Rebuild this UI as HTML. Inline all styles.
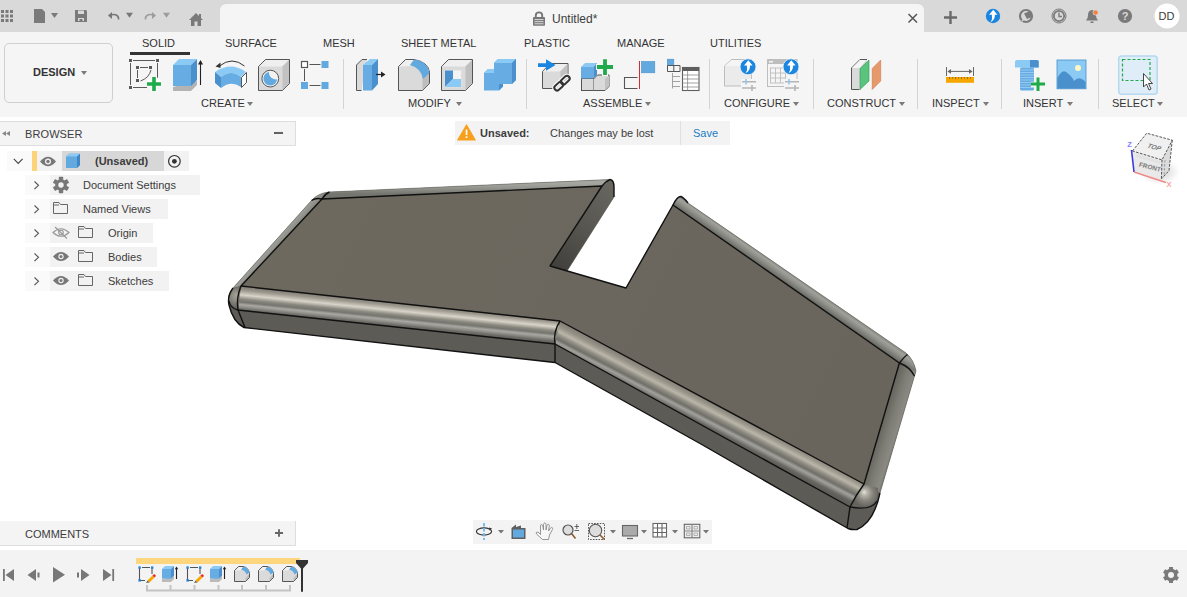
<!DOCTYPE html>
<html><head><meta charset="utf-8">
<style>
*{box-sizing:border-box;margin:0;padding:0}
html,body{width:1187px;height:597px;overflow:hidden;background:#fff;font-family:"Liberation Sans",sans-serif;color:#3c3c3c}
.a{position:absolute}
.t{position:absolute;white-space:pre;line-height:1}
svg{position:absolute;overflow:visible}
#title{left:0;top:0;width:1187px;height:32px;background:#d9d9d9}
#tab{left:220px;top:4px;width:704px;height:28px;background:#f5f5f5;border-radius:6px 6px 0 0}
#tb{left:0;top:32px;width:1187px;height:85px;background:#f5f5f5}
.tl{font-size:11px;color:#333}
.sep{position:absolute;top:59px;width:1px;height:50px;background:#d4d4d4}
.dd{position:absolute;width:0;height:0;border-left:3px solid transparent;border-right:3px solid transparent;border-top:4px solid #7a7a7a}
.ph{position:absolute;left:0;width:296px;height:25px;background:#f4f4f4;border-top:1px solid #dedede;border-bottom:1px solid #dedede;border-right:1px solid #dedede}
.row{position:absolute;height:20px;background:#f2f2f2}
.rt{font-size:11px;color:#3c3c3c}
</style></head><body>
<div id="title" class="a"></div>
<div id="tab" class="a"></div>
<div id="tb" class="a"></div>

<!-- title text -->
<div class="t" style="left:552px;top:13px;font-size:12px;color:#3c3c3c">Untitled*</div>

<!-- toolbar tabs -->
<div class="t tl" style="left:142px;top:38px">SOLID</div>
<div class="a" style="left:130px;top:52px;width:60px;height:3px;background:#333"></div>
<div class="t tl" style="left:225px;top:38px">SURFACE</div>
<div class="t tl" style="left:323px;top:38px">MESH</div>
<div class="t tl" style="left:401px;top:38px">SHEET METAL</div>
<div class="t tl" style="left:524px;top:38px">PLASTIC</div>
<div class="t tl" style="left:617px;top:38px">MANAGE</div>
<div class="t tl" style="left:710px;top:38px">UTILITIES</div>

<!-- design button -->
<div class="a" style="left:4px;top:43px;width:109px;height:60px;border:1.5px solid #cfcfcf;border-radius:5px"></div>
<div class="t" style="left:33px;top:67px;font-size:11px;font-weight:bold;color:#333">DESIGN</div>
<div class="dd" style="left:81px;top:71px"></div>

<!-- group labels -->
<div class="t tl" style="left:201px;top:98px">CREATE</div><div class="dd" style="left:247px;top:102px"></div>
<div class="t tl" style="left:408px;top:98px">MODIFY</div><div class="dd" style="left:456px;top:102px"></div>
<div class="t tl" style="left:583px;top:98px">ASSEMBLE</div><div class="dd" style="left:645px;top:102px"></div>
<div class="t tl" style="left:724px;top:98px">CONFIGURE</div><div class="dd" style="left:793px;top:102px"></div>
<div class="t tl" style="left:827px;top:98px">CONSTRUCT</div><div class="dd" style="left:899px;top:102px"></div>
<div class="t tl" style="left:932px;top:98px">INSPECT</div><div class="dd" style="left:983px;top:102px"></div>
<div class="t tl" style="left:1023px;top:98px">INSERT</div><div class="dd" style="left:1067px;top:102px"></div>
<div class="t tl" style="left:1112px;top:98px">SELECT</div><div class="dd" style="left:1157px;top:102px"></div>

<div class="sep" style="left:343px"></div>
<div class="sep" style="left:526px"></div>
<div class="sep" style="left:709px"></div>
<div class="sep" style="left:813px"></div>
<div class="sep" style="left:917px"></div>
<div class="sep" style="left:1001px"></div>
<div class="sep" style="left:1098px"></div>

<!-- browser -->
<div class="ph" style="top:121px"></div>
<div class="t" style="left:25px;top:129px;font-size:11px;color:#3c3c3c;letter-spacing:0.1px">BROWSER</div>
<div class="a" style="left:274px;top:132px;width:9px;height:1.5px;background:#555"></div>

<div class="row" style="top:151px;left:7px;width:182px;background:#f2f2f2"></div><div class="row" style="top:151px;left:7px;width:25px;background:#fafafa"></div>
<div class="a" style="top:151px;left:32px;width:5px;height:20px;background:#fcd378"></div>
<div class="a" style="top:151px;left:62px;width:102px;height:20px;background:#d7d7d7"></div>
<div class="t rt" style="left:95px;top:156px;font-weight:bold">(Unsaved)</div>

<div class="row" style="top:175px;left:25px;width:25px;background:#fafafa"></div><div class="row" style="top:175px;left:50px;width:150px"></div>
<div class="t rt" style="left:83px;top:180px">Document Settings</div>
<div class="row" style="top:199px;left:25px;width:25px;background:#fafafa"></div><div class="row" style="top:199px;left:50px;width:118px"></div>
<div class="t rt" style="left:83px;top:204px">Named Views</div>
<div class="row" style="top:223px;left:25px;width:25px;background:#fafafa"></div><div class="row" style="top:223px;left:50px;width:103px"></div>
<div class="t rt" style="left:108px;top:228px">Origin</div>
<div class="row" style="top:247px;left:25px;width:25px;background:#fafafa"></div><div class="row" style="top:247px;left:50px;width:107px"></div>
<div class="t rt" style="left:108px;top:252px">Bodies</div>
<div class="row" style="top:271px;left:25px;width:25px;background:#fafafa"></div><div class="row" style="top:271px;left:50px;width:119px"></div>
<div class="t rt" style="left:108px;top:276px">Sketches</div>

<!-- unsaved bar -->
<div class="a" style="left:455px;top:121px;width:275px;height:24px;background:#f3f3f3"></div>
<div class="a" style="left:680px;top:121px;width:1px;height:24px;background:#e0e0e0"></div>
<div class="t" style="left:480px;top:128px;font-size:11px;font-weight:bold;color:#3c3c3c">Unsaved:</div>
<div class="t" style="left:550px;top:128px;font-size:11px;color:#3c3c3c">Changes may be lost</div>
<div class="t" style="left:693px;top:128px;font-size:11px;color:#1a7cc4">Save</div>

<!-- comments -->
<div class="ph" style="top:521px;border-top:none;height:25px"></div>
<div class="t" style="left:25px;top:529px;font-size:11px;color:#3c3c3c">COMMENTS</div>

<!-- nav bar -->
<div class="a" style="left:473px;top:520px;width:239px;height:24px;background:#f3f3f3"></div>

<!-- timeline -->
<div class="a" style="left:0;top:550px;width:1187px;height:47px;background:#f3f3f3"></div>
<div class="a" style="left:136px;top:558px;width:164px;height:6px;background:#fdd67e"></div>

<svg width="1187" height="597" viewBox="0 0 1187 597" style="left:0;top:0"><defs>
 <linearGradient id="gfL" gradientUnits="userSpaceOnUse" x1="400" y1="303.4" x2="397.6" y2="327">
  <stop offset="0" stop-color="#85827a"/>
  <stop offset="0.12" stop-color="#9b978c"/>
  <stop offset="0.32" stop-color="#d8d4c9"/>
  <stop offset="0.5" stop-color="#8a887f"/>
  <stop offset="0.62" stop-color="#75746e"/>
  <stop offset="0.73" stop-color="#a9a8a2"/>
  <stop offset="0.82" stop-color="#908f89"/>
  <stop offset="0.92" stop-color="#6e6e69"/>
  <stop offset="1" stop-color="#62615c"/>
 </linearGradient>
 <linearGradient id="gfR" gradientUnits="userSpaceOnUse" x1="700" y1="396" x2="688" y2="419">
  <stop offset="0" stop-color="#86837a"/>
  <stop offset="0.14" stop-color="#969287"/>
  <stop offset="0.32" stop-color="#bab6a9"/>
  <stop offset="0.46" stop-color="#8e8b82"/>
  <stop offset="0.6" stop-color="#6f6e68"/>
  <stop offset="0.72" stop-color="#a2a19b"/>
  <stop offset="0.8" stop-color="#8b8a84"/>
  <stop offset="0.9" stop-color="#686863"/>
  <stop offset="1" stop-color="#5e5d58"/>
 </linearGradient>
 <linearGradient id="gTop" gradientUnits="userSpaceOnUse" x1="300" y1="200" x2="850" y2="480">
  <stop offset="0" stop-color="#6d695f"/>
  <stop offset="0.5" stop-color="#6b675e"/>
  <stop offset="1" stop-color="#69655c"/>
 </linearGradient>
 <linearGradient id="gBack" gradientUnits="userSpaceOnUse" x1="450" y1="183" x2="450" y2="194">
  <stop offset="0" stop-color="#a6a7a0"/>
  <stop offset="0.45" stop-color="#94958e"/>
  <stop offset="1" stop-color="#75756f"/>
 </linearGradient>
 <linearGradient id="gBR" gradientUnits="userSpaceOnUse" x1="800" y1="293.6" x2="805.9" y2="285.1">
  <stop offset="0" stop-color="#5f5f5a"/>
  <stop offset="0.18" stop-color="#75756f"/>
  <stop offset="0.55" stop-color="#8f9089"/>
  <stop offset="0.85" stop-color="#a0a19a"/>
  <stop offset="1" stop-color="#8f9089"/>
 </linearGradient>
 <linearGradient id="gBL" gradientUnits="userSpaceOnUse" x1="272" y1="246" x2="280" y2="253">
  <stop offset="0" stop-color="#9c9d96"/>
  <stop offset="0.45" stop-color="#8b8c85"/>
  <stop offset="1" stop-color="#6c6c66"/>
 </linearGradient>
 <linearGradient id="gEnd" gradientUnits="userSpaceOnUse" x1="906" y1="425" x2="884" y2="418">
  <stop offset="0" stop-color="#5c5b56"/>
  <stop offset="0.3" stop-color="#8a8982"/>
  <stop offset="0.65" stop-color="#7d7c75"/>
  <stop offset="1" stop-color="#67665f"/>
 </linearGradient>
 <linearGradient id="gWall" gradientUnits="userSpaceOnUse" x1="560" y1="268" x2="612" y2="188">
  <stop offset="0" stop-color="#42413d"/>
  <stop offset="0.5" stop-color="#575650"/>
  <stop offset="1" stop-color="#666560"/>
 </linearGradient>
 <radialGradient id="gBallR" gradientUnits="userSpaceOnUse" cx="866" cy="494" r="13" fx="864" fy="492">
  <stop offset="0" stop-color="#e6e3da"/>
  <stop offset="0.25" stop-color="#b4b1a7"/>
  <stop offset="0.6" stop-color="#85837b"/>
  <stop offset="1" stop-color="#64635d"/>
 </radialGradient>
 <radialGradient id="gBallL" gradientUnits="userSpaceOnUse" cx="236" cy="297" r="11" fx="237" fy="295">
  <stop offset="0" stop-color="#a9a69c"/>
  <stop offset="0.5" stop-color="#8a877e"/>
  <stop offset="1" stop-color="#64635d"/>
 </radialGradient>
</defs>
<!-- silhouette base (side face color) -->
<path d="M311.5 200.5 Q318 193 329 192 L610 179.5 Q614 180 614 187 L614 197 L567 271 L626 288 L673 205 Q677 196 681 196.5 Q684 198 688 203 L906 353 Q914 360 916 371 L880 493 Q874 522 857 529.5 Q852 530 848 528.5 L800 501 L700 443.5 L555 362.5 L244 327.5 Q233 322 229 305 Q227 296 233 288 Z" fill="#5c5b56"/>
<!-- far back fillet band -->
<path d="M329 192 L610 179.5 L602 186 L322 199 Z" fill="url(#gBack)"/>
<!-- far left fillet band -->
<path d="M311.5 200.5 Q318 193 329 192 L322 199 L241 286 L233 288 Z" fill="url(#gBL)"/>
<!-- far right fillet band -->
<path d="M681 196.5 Q684 198 688 203 L906 353 Q914 360 916 371 L899.4 363 L673 205 Q677 196 681 196.5 Z" fill="url(#gBR)"/>
<!-- right end fillet band -->
<path d="M899.4 363 L916 371 L880 493 L864 484 Z" fill="url(#gEnd)"/>
<!-- near fillet left -->
<path d="M241 286 L560 321 L555 344 L238 310 Z" fill="url(#gfL)"/>
<!-- near fillet right -->
<path d="M560 321 L864 484 L850 507 L555 344 Z" fill="url(#gfR)"/>
<!-- notch wall -->
<path d="M602 186 L610 179.5 Q614 180 614 187 L614 197 L567 271 L550 266 Z" fill="url(#gWall)"/>
<!-- corner balls -->
<path d="M241 286 L233 288 Q226 296 229 303 Q232 310 238 310 Z" fill="url(#gBallL)"/>
<path d="M864 484 L878 488 Q879 503 869 508 Q858 510 850 507 Z" fill="url(#gBallR)"/>
<!-- top face -->
<path d="M241 286 L322 199 L602 186 L550 266 L626 288 L673 205 L899.4 363 L864 484 L560 321 Z" fill="url(#gTop)"/>
<!-- soft silhouette edge -->
<path d="M233 288 L311.5 200.5 Q318 193 329 192 L610 179.5 M614 197 L567 271 M688 203 L906 353 Q914 360 916 371 L880 493" fill="none" stroke="#6a6a65" stroke-width="0.6"/>
<!-- lines -->
<g fill="none" stroke="#111" stroke-width="1.4" stroke-linejoin="round">
 <path d="M241 286 L322 199 L602 186 L550 266 L626 288 L673 205 L899.4 363 L864 484 L560 321 Z"/>
 <path d="M238 310 L555 344 L850 507"/>
 <path d="M241 286 Q236 298 238 310 L245 327.5"/>
 <path d="M560 321 Q553 332 555 344 L555 362.5"/>
 <path d="M864 484 Q856 495 850 507 L847 528"/>
 <path d="M899.4 363 Q905 356 907.5 354.5"/>
 <path d="M899.4 363 Q910 367 914.5 376"/>
 <path d="M322 199 Q325 194 329.5 192"/>
 <path d="M311.5 200.5 Q316 197.5 322 199"/>
 <path d="M602 186 Q606 181 610 179.5 Q614 180 614 187 L614 197"/>
 <path d="M673 205 Q677 196.5 681 196.5 Q684 198 688 203"/>
 <path d="M238 310 Q230 308 229 301"/>
 <path d="M850 507 Q871 511 877 501"/>
 <path d="M880 493 Q874 522 857 529.5 Q852 530 848 528.5 L800 501 L700 443.5 L555 362.5 L244 327.5 Q233 322 229 305 Q227 296 233 288"/>
</g>
<!-- title bar icons -->
<g fill="#7a7a7a">
  <!-- grid 3x3 -->
  <rect x="1" y="10" width="3" height="3"/><rect x="5.5" y="10" width="3" height="3"/><rect x="10" y="10" width="3" height="3"/>
  <rect x="1" y="14.5" width="3" height="3"/><rect x="5.5" y="14.5" width="3" height="3"/><rect x="10" y="14.5" width="3" height="3"/>
  <rect x="1" y="19" width="3" height="3"/><rect x="5.5" y="19" width="3" height="3"/><rect x="10" y="19" width="3" height="3"/>
  <!-- file -->
  <path d="M34 9h8l3 3v11h-11z"/>
  <path d="M51 13h7l-3.5 5z"/>
  <!-- save -->
  <path d="M75 10h11l1 1v11h-12z"/>
</g>
<rect x="78" y="10.5" width="6" height="3.5" fill="#d9d9d9"/>
<rect x="78" y="18" width="6" height="3" fill="#d9d9d9"/>
<rect x="79.5" y="19" width="3" height="2" fill="#7a7a7a"/>
<!-- undo -->
<path d="M109.5 15.5 Q114 13.5 117 15.5 Q119 17 118.5 19.5" fill="none" stroke="#777" stroke-width="1.6"/>
<path d="M108 15.5 L112 12 L112 19 Z" fill="#777"/>
<path d="M126 12.7h7l-3.5 5z" fill="#777"/>
<!-- redo -->
<path d="M154.5 15.5 Q150 13.5 147 15.5 Q145 17 145.5 19.5" fill="none" stroke="#9c9c9c" stroke-width="1.6"/>
<path d="M156 15.5 L152 12 L152 19 Z" fill="#9c9c9c"/>
<path d="M163 12.7h7l-3.5 5z" fill="#9c9c9c"/>
<!-- home -->
<path d="M189 20 L196 13 L203 20 L201 20 L201 26 L191 26 L191 20 Z" fill="#7a7a7a"/>
<rect x="199" y="14" width="2" height="4" fill="#7a7a7a"/>
<rect x="194.5" y="21.5" width="3" height="4.5" fill="#d9d9d9"/>
<!-- close x -->
<path d="M908.5 14 L917 22.5 M917 14 L908.5 22.5" stroke="#555" stroke-width="1.5"/>
<!-- plus -->
<path d="M944 17.5h13 M950.5 11v13" stroke="#6a6a6a" stroke-width="2.4"/>
<!-- blue update circle -->
<circle cx="993" cy="16" r="7.2" fill="#1a86e0"/>
<path d="M993.3 9.8 L997.4 14.8 L994.9 14.8 Q995.3 19.4 990.6 22.3 Q992.8 18.8 991.9 14.8 L989.1 14.8 Z" fill="#fff"/>
<!-- connection icon -->
<circle cx="1026" cy="16" r="6" fill="none" stroke="#7a7a7a" stroke-width="2.2"/>
<path d="M1024 13.5 L1030 11 L1032 17 L1027 19 Z" fill="#7a7a7a"/>
<path d="M1022 21 L1024.5 18.5" stroke="#d9d9d9" stroke-width="1.5"/>
<!-- clock -->
<circle cx="1059" cy="16" r="7" fill="none" stroke="#7a7a7a" stroke-width="1"/>
<circle cx="1059" cy="16" r="5.2" fill="none" stroke="#7a7a7a" stroke-width="1.8"/>
<path d="M1059 12.5 V16.5 H1062" fill="none" stroke="#7a7a7a" stroke-width="1.4"/>
<!-- bell -->
<path d="M1086 20.5 Q1088 19 1088 15 Q1088 10.5 1092 10 Q1096 10.5 1096 15 Q1096 19 1098 20.5 Z" fill="#7a7a7a"/>
<rect x="1090.5" y="21.5" width="3" height="1.5" fill="#7a7a7a"/>
<circle cx="1095.6" cy="12.5" r="2.6" fill="#f57f3b" stroke="#d9d9d9" stroke-width="0.8"/>
<!-- help -->
<circle cx="1125" cy="16" r="7.1" fill="#7a7a7a"/>
<text x="1125" y="20.3" font-family="Liberation Sans" font-weight="bold" font-size="11" fill="#d9d9d9" text-anchor="middle">?</text>
<!-- avatar -->
<circle cx="1167" cy="16" r="12.5" fill="#fff"/>
<text x="1166.5" y="20" font-family="Liberation Sans" font-size="11" fill="#3c3c3c" text-anchor="middle">DD</text>
<!-- lock -->
<path d="M535.8 17.5 V15.5 Q535.8 12.4 539 12.4 Q542.2 12.4 542.2 15.5 V17.5" fill="none" stroke="#777" stroke-width="1.9"/>
<rect x="533" y="17" width="12" height="8.8" rx="0.8" fill="#777"/>
<path d="M534.5 19.6 H543.5 M534.5 21.7 H543.5 M534.5 23.8 H543.5" stroke="#f5f5f5" stroke-width="0.8"/>
<!-- CREATE: sketch -->
<g stroke="#5a5a5a" stroke-width="1" fill="none">
  <path d="M133 60.5h22 M130.5 63v22 M157.5 63v15 M133 87.5h14"/>
  <path d="M140 67.5h8 M137.5 70v8"/>
  <path d="M151 70 Q149 78 140.5 81"/>
</g>
<g fill="#5a5a5a">
  <rect x="129" y="59" width="3" height="3"/><rect x="156" y="59" width="3" height="3"/>
  <rect x="129" y="86" width="3" height="3"/>
  <rect x="136" y="66" width="3" height="3"/><rect x="149" y="66" width="3" height="3"/><rect x="136" y="79" width="3" height="3"/>
</g>
<path d="M147 82.5h14 M154 77v14" stroke="#fff" stroke-width="6.5"/>
<path d="M147 84h14 M154 77v14" stroke="#1fab4b" stroke-width="3.6"/>
<!-- extrude -->
<path d="M173 87v4h18l6-6v-4z" fill="#b3b3b3"/>
<path d="M173 86h18l6-6v0l-6 6" fill="#f5f5f5"/>
<path d="M173 65l6-6h18l-6 6z" fill="#8ccaf6"/>
<rect x="173" y="65" width="18" height="21" fill="#67ade3"/>
<path d="M191 65l6-6v21l-6 6z" fill="#4a90cc"/>
<path d="M200.5 85v-22" stroke="#222" stroke-width="1.1"/>
<path d="M198 64.5l2.5-4.5l2.5 4.5z" fill="#222"/>
<!-- revolve -->
<path d="M219.5 66 Q232 56 244.5 66" fill="none" stroke="#333" stroke-width="1"/>
<path d="M215.5 66.5 L220.5 62.5 L220.5 68 Z" fill="#333"/>
<path d="M215 72 Q231 61 246 72 L241 77 Q231 69 221 77 Z" fill="#8ccaf6"/>
<path d="M221 77 Q231 69 241 77 V87 Q231 80 221 88 Z" fill="#67ade3"/>
<path d="M215 72 L221 77 V88 L215 83 Z" fill="#4a90cc"/>
<path d="M241.5 77.5 L246.5 72.5 V82.5 L241.5 87.5 Z" fill="#fff" stroke="#444" stroke-width="0.9"/>
<!-- hole -->
<path d="M258.5 66.5 L265.5 59.5 H289.5 V83.5 L282.5 90.5 H258.5 Z" fill="#dadada" stroke="#555" stroke-width="1"/>
<path d="M259 66.5 L266 60 H289 L282 66.5 Z" fill="#efefef"/>
<path d="M282.5 66.5 L289 60 V83.5 L282.5 90 Z" fill="#c2c2c2"/>
<mask id="mhole"><rect x="255" y="55" width="40" height="40" fill="#fff"/><circle cx="276.3" cy="71.8" r="7.6" fill="#000"/></mask>
<circle cx="270.3" cy="78.6" r="8.4" fill="#f2f2f2" stroke="#555" stroke-width="1"/>
<circle cx="270.3" cy="78.6" r="6.9" fill="#62a9df" mask="url(#mhole)"/>
<!-- pattern -->
<rect x="301.5" y="61.5" width="6" height="6" fill="#fff" stroke="#555" stroke-width="1.2"/>
<rect x="321.5" y="61" width="7" height="7" fill="#62a9df"/>
<rect x="301" y="82" width="7" height="7" fill="#62a9df"/>
<rect x="321.5" y="82" width="7" height="7" fill="#62a9df"/>
<path d="M309.5 64.5h11 M304.5 69v12 M309.5 85.5h11" stroke="#555" stroke-width="1"/>

<!-- MODIFY: press pull -->
<path d="M361.5 90.5 H356.5 V65 L362 59.5 H367" fill="#dadada" stroke="#555" stroke-width="1"/>
<rect x="357" y="65.5" width="5" height="24.5" fill="#dadada"/>
<path d="M363 65 L370 59 H378 L372 65 Z" fill="#8ccaf6"/>
<rect x="363" y="65" width="9" height="25.5" fill="#67ade3"/>
<path d="M372 65 L378 59 V84 L372 90.5 Z" fill="#4a90cc"/>
<path d="M376 74.5 H382" stroke="#222" stroke-width="1.2"/>
<path d="M381 71.5 L385.5 74.5 L381 77.5 Z" fill="#222"/>
<!-- fillet -->
<path d="M398.5 90.5 V66.5 L405.5 59.5 H414 Q428 62 429.5 72 V83.5 L422.5 90.5 Z" fill="#dadada" stroke="#555" stroke-width="1"/>
<path d="M399 66.5 L406 60 H414 L410 66 Z" fill="#efefef"/>
<path d="M422.5 75 L429 69 V83.5 L422.5 90 Z" fill="#bdbdbd"/>
<path d="M410 65 L414 59.5 Q427 61 429.5 73 L423 79 Q421 68 410 65 Z" fill="#62a9df"/>
<!-- shell -->
<path d="M441.5 66.5 L448.5 59.5 H472.5 V83.5 L465.5 90.5 H441.5 Z" fill="#dadada" stroke="#555" stroke-width="1"/>
<path d="M442 66.5 L449 60 H472 L465.5 66.5 Z" fill="#efefef"/>
<path d="M465.5 66.5 L472 60 V83.5 L465.5 90 Z" fill="#c0c0c0"/>
<rect x="444" y="69.5" width="18.5" height="18.5" fill="#dedede"/>
<rect x="445" y="70.5" width="16" height="16.5" fill="#f3f3f3"/>
<path d="M445 70.5 H453 V79 L445 87 Z" fill="#4a90cc"/>
<path d="M445 87 L453 79 H461 V87 Z" fill="#8ccaf6"/>
<!-- combine -->
<path d="M484 90.5 V73 L488 69 H494 V63 L498 59 H516 V80 L512 84 H503 V86.5 L499 90.5 Z" fill="#67ade3"/>
<path d="M484 73 L488 69 H494 V73 Z M494 63 L498 59 H516 L512 63 Z" fill="#8ccaf6"/>
<path d="M512 63 L516 59 V80 L512 84 Z M499 84 H503 V86.5 L499 90.5 Z" fill="#4a90cc"/>

<!-- ASSEMBLE: joint -->
<path d="M542.5 88.5 V71.5 L550 63.5 H568 V81 L560.5 88.5 Z" fill="#dadada" stroke="#555" stroke-width="1"/>
<path d="M543 71.5 L550.5 64 H567.5 L560 71.5 Z" fill="#efefef"/>
<path d="M560.5 71.5 L567.5 64 V81 L560.5 88 Z" fill="#c2c2c2"/>
<path d="M538 63.2 H546 V59.2 L555.5 65 L546 70.8 V67 H538 Z" fill="#1a86e0"/>
<g fill="none" stroke="#f5f5f5" stroke-width="4.5">
 <rect x="-6" y="-2.7" width="10" height="5.4" rx="2.7" transform="translate(559.5,85.5) rotate(-42)"/>
 <rect x="-4" y="-2.7" width="10" height="5.4" rx="2.7" transform="translate(564.5,80.8) rotate(-42)"/>
</g>
<g fill="none" stroke="#333" stroke-width="2">
 <rect x="-6" y="-2.7" width="10" height="5.4" rx="2.7" transform="translate(559.5,85.5) rotate(-42)"/>
 <rect x="-4" y="-2.7" width="10" height="5.4" rx="2.7" transform="translate(564.5,80.8) rotate(-42)"/>
</g>
<!-- new component -->
<rect x="581.5" y="78.5" width="12" height="12" fill="#dadada" stroke="#555" stroke-width="1"/>
<path d="M593.5 90.5 H605 L609 86.5 V75 H597.5 L593.5 79" fill="#dadada" stroke="#555" stroke-width="1"/>
<path d="M605 79 L609 75.5 V86 L605 90 Z" fill="#c2c2c2"/>
<path d="M581 67 L585 63 H597 L593 67 Z" fill="#8ccaf6"/>
<rect x="581" y="67" width="12.3" height="11.5" fill="#67ade3"/>
<path d="M593.3 67 L597 63 V75 L593.3 78.5 Z" fill="#4a90cc"/>
<path d="M596 67 H614 M605 58 V76" stroke="#f5f5f5" stroke-width="6"/>
<path d="M597 67 H613 M605 59.2 V74.9" stroke="#1fab4b" stroke-width="3.8"/>
<!-- joint origin -->
<path d="M637.5 77.5 H624.5 V88.5 H637.5" fill="none" stroke="#555" stroke-width="1.1"/>
<path d="M639.5 61 V89" stroke="#d92b2b" stroke-width="1"/>
<rect x="641.5" y="61.5" width="13.3" height="11.3" fill="#62a9df" stroke="#4a90cc" stroke-width="0.6"/>
<!-- table -->
<rect x="667.3" y="59.2" width="6.5" height="6.3" fill="#62a9df" stroke="#4a90cc" stroke-width="0.6"/>
<path d="M667.5 65.5 H680 V71.5 H667.5 Z M673.8 65.5 V71.5" fill="none" stroke="#555" stroke-width="1"/>
<path d="M672.5 73 V88.5 M672.5 76.5 H680 M672.5 81.5 H680 M672.5 86.5 H680" stroke="#999" stroke-width="0.9"/>
<rect x="682.5" y="67.5" width="16.5" height="23" fill="#fff" stroke="#5e5e5e" stroke-width="1.1"/>
<rect x="682.5" y="67.5" width="16.5" height="3.5" fill="#5e5e5e"/>
<path d="M687.6 71 V90.5 M682.5 75 H699 M682.5 79 H699 M682.5 83 H699 M682.5 87 H699" stroke="#8a8a8a" stroke-width="0.8"/>

<!-- CONFIGURE -->
<path d="M724.5 86 V66 L731.5 59.5 H751.5 V86 Z" fill="#ebebeb" stroke="#bdbdbd" stroke-width="1"/>
<path d="M725 66 L731.5 60 H751 V66 Z" fill="#f5f5f5"/>
<circle cx="748" cy="66.8" r="8" fill="#1a86e0" stroke="#f5f5f5" stroke-width="0.8"/>
<path d="M748.3 60.2 L752.6 65.4 L750 65.4 Q750.4 70.2 745.6 73.2 Q747.8 69.6 746.9 65.4 L744 65.4 Z" fill="#fff"/>
<rect x="741" y="79" width="16" height="10" fill="#f5f5f5"/>
<path d="M742 81.8 H756 M742 88 H756" stroke="#b5b5b5" stroke-width="1.6"/>
<path d="M746 79 V84.5" stroke="#8cc8f0" stroke-width="1.6"/>
<path d="M752 85 V91" stroke="#b5b5b5" stroke-width="1.6"/>

<rect x="767.5" y="59.5" width="29.5" height="27" fill="#f5f5f5" stroke="#bdbdbd" stroke-width="1"/>
<rect x="767.5" y="59.5" width="29.5" height="4.5" fill="#bdbdbd"/>
<rect x="769" y="61" width="4" height="1.5" fill="#f5f5f5"/>
<g stroke="#bdbdbd" stroke-width="0.9" fill="none">
<rect x="770.5" y="68" width="15" height="15"/>
<path d="M775.5 68 V83 M780.5 68 V83 M770.5 73 H785.5 M770.5 78 H785.5"/>
</g>
<circle cx="791" cy="66.8" r="8" fill="#1a86e0" stroke="#f5f5f5" stroke-width="0.8"/>
<path d="M791.3 60.2 L795.6 65.4 L793 65.4 Q793.4 70.2 788.6 73.2 Q790.8 69.6 789.9 65.4 L787 65.4 Z" fill="#fff"/>
<rect x="784" y="79" width="16" height="10" fill="#f5f5f5"/>
<path d="M785 81.8 H799 M785 88 H799" stroke="#b5b5b5" stroke-width="1.6"/>
<path d="M789 79 V84.5" stroke="#8cc8f0" stroke-width="1.6"/>
<path d="M795 85 V91" stroke="#b5b5b5" stroke-width="1.6"/>

<!-- CONSTRUCT -->
<path d="M859.5 89.5 H851.5 V68 L860 59.5 H867" fill="#dadada" stroke="#555" stroke-width="1"/>
<path d="M852 68 L860 60 H866 L860 68 Z" fill="#f5f5f5"/>
<path d="M860 68.5 L869 60 V81 L860 89.5 Z" fill="#5ac47e" stroke="#2a9a50" stroke-width="0.6"/>
<path d="M872.2 68.5 L880.7 60 V81 L872.2 89.5 Z" fill="#e6996a" stroke="#cc7a45" stroke-width="0.6"/>

<!-- INSPECT -->
<path d="M946.5 67 V76 M973.5 67 V76" stroke="#666" stroke-width="1"/>
<path d="M948 71.4 H972" stroke="#666" stroke-width="1"/>
<path d="M947.5 71.4 L951 69 V73.8 Z M972.5 71.4 L969 69 V73.8 Z" fill="#666"/>
<rect x="946" y="77" width="28" height="5.8" fill="#f5a700"/>
<path d="M949.5 77 V79 M952.5 77 V78.5 M955.5 77 V79 M958.5 77 V78.5 M961.5 77 V79 M964.5 77 V78.5 M967.5 77 V79 M970.5 77 V78.5" stroke="#8a5c00" stroke-width="0.8"/>

<!-- INSERT: bolt -->
<path d="M1015 61.5 Q1015 60 1017 60 H1037 Q1038.7 60 1038.7 61.5 V67.5 H1015 Z" fill="#8ccaf6"/>
<path d="M1030 60 H1037 Q1038.7 60 1038.7 61.5 V67.5 H1030 Z" fill="#4a90cc"/>
<rect x="1020" y="67.5" width="14" height="23" rx="1.5" fill="#67ade3"/>
<path d="M1020 70 H1034 M1020 72.5 H1034 M1020 75 H1034 M1020 77.5 H1034 M1020 80 H1034 M1020 82.5 H1034 M1020 85 H1034 M1020 87.5 H1034" stroke="#9fd0f2" stroke-width="0.8"/>
<path d="M1031 84.5 H1045 M1038 77.5 V91" stroke="#f5f5f5" stroke-width="5.5"/>
<path d="M1031 84 H1045 M1038 77.5 V91" stroke="#1fab4b" stroke-width="3"/>
<!-- image -->
<rect x="1057" y="60" width="29" height="28.8" fill="#8ccaf6" stroke="#4a90cc" stroke-width="0.8"/>
<path d="M1057.4 88.4 V78 Q1062 69 1066 72 Q1072 76 1074 81 Q1079 75 1085.6 82 V88.4 Z" fill="#4a90cc"/>
<circle cx="1078" cy="68" r="3" fill="#fdf6c0"/>
<!-- SELECT -->
<rect x="1118.7" y="56" width="38.5" height="38.2" rx="3" fill="#deedf7" stroke="#b5d8f0" stroke-width="1.5"/>
<rect x="1122.5" y="59.5" width="27.5" height="21" fill="none" stroke="#1fab4b" stroke-width="1.2" stroke-dasharray="3 2"/>
<path d="M1143.5 73.5 V87 L1146.5 84 L1149 90 L1151 89 L1148.5 83.5 H1152.5 Z" fill="#fff" stroke="#333" stroke-width="0.9"/>
<!-- browser header -->
<path d="M6 131 L2 133.5 L6 136 Z M10 131 L6 133.5 L10 136 Z" fill="#888"/>
<path d="M275 132.8 H283" stroke="#666" stroke-width="1.7"/>
<!-- row chevrons -->
<path d="M13.8 158.8 L18.2 163.4 L22.6 158.8" fill="none" stroke="#444" stroke-width="1.1"/>
<g fill="none" stroke="#555" stroke-width="1.1">
<path d="M34.5 181.5 L38.5 185.3 L34.5 189"/>
<path d="M34.5 205.5 L38.5 209.3 L34.5 213"/>
<path d="M34.5 229.5 L38.5 233.3 L34.5 237"/>
<path d="M34.5 253.5 L38.5 257.3 L34.5 261"/>
<path d="M34.5 277.5 L38.5 281.3 L34.5 285"/>
</g>
<!-- eye row1 -->
<g id="eye1">
<path d="M40 161.5 Q48 152 56 161.5 Q48 171 40 161.5 Z" fill="#777"/>
<circle cx="48" cy="161.5" r="3" fill="#f2f2f2"/>
<circle cx="48" cy="161.5" r="1.7" fill="#777"/>
</g>
<!-- cube icon -->
<path d="M66 156.5 L69 153.8 H80 V165 L77 168 H66 Z" fill="#62a9df"/>
<path d="M66 156.5 L69 153.8 H80 L77 156.5 Z" fill="#8ccaf6"/>
<path d="M77 156.5 L80 153.8 V165 L77 168 Z" fill="#3f86c4"/>
<!-- radio -->
<circle cx="174.4" cy="161.3" r="5.8" fill="none" stroke="#333" stroke-width="1.2"/>
<circle cx="174.4" cy="161.3" r="2.4" fill="#333"/>
<!-- gear -->
<g transform="translate(61,185)">
<circle r="5.8" fill="#777"/>
<g fill="#777">
<rect x="-2.2" y="-8.2" width="4.4" height="16.4" rx="0.6"/>
<rect x="-2.2" y="-8.2" width="4.4" height="16.4" rx="0.6" transform="rotate(60)"/>
<rect x="-2.2" y="-8.2" width="4.4" height="16.4" rx="0.6" transform="rotate(120)"/>
</g>
<circle r="2.7" fill="#f2f2f2"/>
</g>
<!-- folders -->
<g fill="none" stroke="#666" stroke-width="1">
<path d="M53.5 213.5 V202.5 H59 L60.5 204.5 H67.5 V213.5 Z M53.5 205 H59"/>
<path d="M78.5 237.5 V226.5 H84 L85.5 228.5 H92.5 V237.5 Z M78.5 229 H84"/>
<path d="M78.5 261.5 V250.5 H84 L85.5 252.5 H92.5 V261.5 Z M78.5 253 H84"/>
<path d="M78.5 285.5 V274.5 H84 L85.5 276.5 H92.5 V285.5 Z M78.5 277 H84"/>
</g>
<!-- eye hidden row4 -->
<path d="M53 232.5 Q61 225 69 232.5 Q61 240 53 232.5 Z" fill="none" stroke="#999" stroke-width="1.1"/>
<circle cx="61" cy="232.5" r="2.3" fill="none" stroke="#999" stroke-width="1.1"/>
<path d="M55 227 L67 238.5" stroke="#999" stroke-width="1.1"/>
<!-- eyes rows 5,6 -->
<path d="M53 256.5 Q61 247.5 69 256.5 Q61 265.5 53 256.5 Z" fill="#777"/>
<circle cx="61" cy="256.5" r="2.7" fill="#f0f0f0"/><circle cx="61" cy="256.5" r="1.5" fill="#777"/>
<path d="M53 280.5 Q61 271.5 69 280.5 Q61 289.5 53 280.5 Z" fill="#777"/>
<circle cx="61" cy="280.5" r="2.7" fill="#f0f0f0"/><circle cx="61" cy="280.5" r="1.5" fill="#777"/>
<!-- comments plus -->
<path d="M275 533 H283 M279 529.2 V536.8" stroke="#666" stroke-width="1.9"/>

<!-- warning triangle -->
<path d="M466.5 125 L475.2 140 H457.8 Z" fill="#f7a01e" stroke="#f7a01e" stroke-width="1.2" stroke-linejoin="round"/>
<rect x="465.7" y="129.5" width="1.7" height="5.5" fill="#fff"/>
<rect x="465.7" y="136.3" width="1.7" height="1.7" fill="#fff"/>

<!-- nav bar -->
<ellipse cx="484" cy="531.5" rx="7.6" ry="3.6" fill="none" stroke="#333" stroke-width="1.1"/>
<path d="M484 523 V540" stroke="#6cb8ee" stroke-width="1.8" stroke-dasharray="3.5 1.5"/>
<path d="M489 527.5 L492 528.5 L489.5 530.5 Z" fill="#333"/>
<path d="M498 530 H504 L501 533.5 Z" fill="#777"/>
<!-- look at -->
<path d="M511.5 539 V528 L516 524.5 V527 L521 525.5 V528 H525.5 V539 Z" fill="#5f5f5f"/>
<rect x="513" y="529.5" width="11" height="8" fill="#62a9df"/>
<!-- hand -->
<path d="M542.5 539.5 L536.5 534 Q535.5 532.5 537 532 Q538 531.8 539 533 L540.5 534.5 V526 Q540.5 524.5 541.5 524.5 Q542.5 524.5 542.8 526 L543.5 530 V524.5 Q543.7 523 544.8 523 Q546 523 546 524.5 V530 L547 525.5 Q547.5 524 548.5 524.3 Q549.5 524.8 549.3 526.3 L548.5 531 L550.5 528 Q551.5 527 552.3 527.7 Q553 528.5 552.3 529.7 L549.5 535 L548.5 539.5 Z" fill="#f7f7f7" stroke="#8a8a8a" stroke-width="0.9" stroke-linejoin="round"/>
<!-- zoom -->
<circle cx="568" cy="530" r="5" fill="#ddd" stroke="#555" stroke-width="1.2"/>
<path d="M571.5 533.5 L575.5 538.5" stroke="#8a5a2a" stroke-width="1.6"/>
<path d="M574.5 526.5 H579 M576.8 524 V529 M574.5 530.5 H579" stroke="#555" stroke-width="0.9"/>
<!-- fit -->
<rect x="588.5" y="523.5" width="16" height="16" fill="none" stroke="#444" stroke-width="0.9" stroke-dasharray="1.6 1.2"/>
<circle cx="595.5" cy="530.5" r="6.2" fill="#ddd" stroke="#555" stroke-width="1.1"/>
<path d="M600 535 L604.5 539.5" stroke="#8a5a2a" stroke-width="1.6"/>
<path d="M610 530 H616 L613 533.5 Z" fill="#777"/>
<!-- display -->
<rect x="622.5" y="525.5" width="15" height="10.5" fill="#aaa" stroke="#666" stroke-width="1.1"/>
<path d="M627 538.5 H633" stroke="#666" stroke-width="1.3"/>
<path d="M641 530 H647 L644 533.5 Z" fill="#777"/>
<!-- grid -->
<rect x="653" y="523.5" width="13.5" height="13.5" fill="#fff" stroke="#666" stroke-width="1.1"/>
<path d="M657.5 523.5 V537 M662 523.5 V537 M653 528 H666.5 M653 532.5 H666.5" stroke="#666" stroke-width="1.1"/>
<path d="M672 530 H678 L675 533.5 Z" fill="#777"/>
<!-- viewports -->
<rect x="684.3" y="524.3" width="15.5" height="13.5" fill="#eee" stroke="#666" stroke-width="1.1"/>
<path d="M692 524.3 V537.8 M684.3 531 H699.8" stroke="#888" stroke-width="1.2"/>
<path d="M686.5 526.5 H690 V529 H686.5 Z M694 526.5 H697.5 V529 H694 Z M686.5 533 H690 V535.5 H686.5 Z M694 533 H697.5 V535.5 H694 Z" fill="none" stroke="#999" stroke-width="0.7"/>
<path d="M703 530 H709 L706 533.5 Z" fill="#777"/>

<!-- timeline controls -->
<g fill="#777">
<rect x="3" y="569" width="1.8" height="12"/><path d="M14 569 V581 L5.5 575 Z"/>
<path d="M36 569 V581 L27.5 575 Z"/><rect x="37.5" y="572.5" width="2" height="5"/>
<path d="M53 567 V582.5 L65 574.8 Z"/>
<rect x="77" y="572.5" width="2" height="5"/><path d="M81 569 V581 L89.5 575 Z"/>
<path d="M103 569 V581 L111.5 575 Z"/><rect x="112.3" y="569" width="1.8" height="12"/>
</g>
<!-- timeline items -->
<g id="tlsk">
</g>
<defs>
<g id="tsk">
 <path d="M0.5 1 V13 M1 13.5 H6 M13 1 V7 M3 0.5 H11" stroke="#555" stroke-width="1.1" fill="none"/>
 <rect x="-0.6" y="-0.6" width="2.4" height="2.4" fill="#1a86e0"/>
 <rect x="12" y="-0.6" width="2.4" height="2.4" fill="#1a86e0"/>
 <rect x="-0.6" y="12.2" width="2.4" height="2.4" fill="#1a86e0"/>
 <path d="M8.5 13.5 L13.5 8.5 L15.5 10.5 L10.5 15.5 Z" fill="#f5a700"/>
 <path d="M13.5 8.5 L14.5 7.5 Q15.5 7 16.5 8 Q17 9 16.5 9.5 L15.5 10.5 Z" fill="#e8262b"/>
 <path d="M8.5 13.5 L7 16 L10.5 15.5 Z" fill="#666"/>
</g>
<g id="tex">
 <path d="M0 13 V16 H9 L12 13 V10 Z" fill="#bbb"/>
 <path d="M0 3 L3 0 H12 L9 3 Z" fill="#8ccaf6"/>
 <rect x="0" y="3" width="9" height="9.6" fill="#67ade3"/>
 <path d="M9 3 L12 0 V9.6 L9 12.6 Z" fill="#4a90cc"/>
 <path d="M14.5 13 V2" stroke="#222" stroke-width="1.1"/>
 <path d="M12.8 3.2 L14.5 0.5 L16.2 3.2 Z" fill="#222"/>
</g>
<g id="tfi">
 <path d="M0.5 15.5 V4.5 L4.5 0.5 H9 Q14.5 1.5 15.5 7.5 V11.5 L11.5 15.5 Z" fill="#dadada" stroke="#555" stroke-width="1"/>
 <path d="M1 4.5 L4.8 1 H9 L7 4.3 Z" fill="#f2f2f2"/>
 <path d="M11.5 12 L15 8.5 V11.3 L11.5 15 Z" fill="#bdbdbd"/>
 <path d="M7 3.5 L9.5 0.5 Q14.5 1.5 15.5 6.5 L12.5 8.5 Q11.5 4.5 7 3.5 Z" fill="#62a9df"/>
</g>
</defs>
<use href="#tsk" x="139" y="567"/>
<use href="#tex" x="162" y="566"/>
<use href="#tsk" x="187" y="567"/>
<use href="#tex" x="210" y="566"/>
<use href="#tfi" x="234" y="566"/>
<use href="#tfi" x="258" y="566"/>
<use href="#tfi" x="282" y="566"/>
<path d="M147 585 V590.5 H290 V585 M170.5 585 V590 M194.5 585 V590 M218.5 585 V590 M242 585 V590 M266 585 V590" fill="none" stroke="#c4c4c4" stroke-width="2"/>
<path d="M296 560 H308 V563 L303 568.5 V591.7 H301 V568.5 L296 563 Z" fill="#333"/>
<!-- gear bottom right -->
<g transform="translate(1171,575)">
<circle r="6.4" fill="#7a7a7a"/>
<g fill="#7a7a7a">
<rect x="-2" y="-8" width="4" height="16"/>
<rect x="-2" y="-8" width="4" height="16" transform="rotate(60)"/>
<rect x="-2" y="-8" width="4" height="16" transform="rotate(120)"/>
</g>
<circle r="3" fill="#f3f3f3"/>
</g>
<!-- view cube -->
<defs><radialGradient id="cshadow" cx="0.5" cy="0.5" r="0.5"><stop offset="0" stop-color="#000" stop-opacity="0.18"/><stop offset="1" stop-color="#000" stop-opacity="0"/></radialGradient></defs>
<ellipse cx="1160" cy="172" rx="20" ry="13" fill="url(#cshadow)"/>
<g>
 <path d="M1132.5 151 L1146.7 133.2 L1172.3 140.2 L1169 170.7 L1161.4 178.9 L1134 171.8 Z" fill="#ececec"/>
 <path d="M1132.5 151 L1162 159.9 L1161.4 178.9 L1134 171.8 Z" fill="#e9e9e9"/>
 <path d="M1162 159.9 L1172.3 140.2 L1169 170.7 L1161.4 178.9 Z" fill="#dcdcdc"/>
 <path d="M1132.5 151 L1146.7 133.2 L1172.3 140.2 L1162 159.9 Z" fill="#f0f0f0"/>
 <path d="M1136 154 L1160 161 L1160 164 L1136 157 Z" fill="#e2e2e2"/>
 <g fill="none" stroke="#444" stroke-width="0.9" stroke-dasharray="2.6 1.4">
  <path d="M1132.5 151 L1146.7 133.2 L1172.3 140.2 L1162 159.9 Z"/>
  <path d="M1162 159.9 L1161.4 178.9 M1172.3 140.2 L1169 170.7 L1161.4 178.9"/>
  <path d="M1165 160 L1164 176" stroke="#999"/>
 </g>
 <path d="M1134 172 L1131.5 150" stroke="#3a3ae0" stroke-width="1.6"/>
 <path d="M1134 172 L1166 182.5" stroke="#f08a8a" stroke-width="1.7"/>
 <text x="1127.2" y="147" font-family="Liberation Sans" font-size="7.5" font-weight="bold" fill="#8080f5">Z</text>
 <text x="1166.5" y="187" font-family="Liberation Sans" font-size="7.5" font-weight="bold" fill="#f5a0a0">X</text>
 <text x="0" y="0" font-family="Liberation Sans" font-size="6.5" font-weight="bold" fill="#7a7a7a" transform="translate(1138.5,166.5) rotate(14) skewX(-3)">FRONT</text>
 <text x="0" y="0" font-family="Liberation Sans" font-size="6.5" font-weight="bold" fill="#7a7a7a" transform="translate(1146.5,147.5) rotate(14) skewX(-22)">TOP</text>
</g>
</svg>
</body></html>
